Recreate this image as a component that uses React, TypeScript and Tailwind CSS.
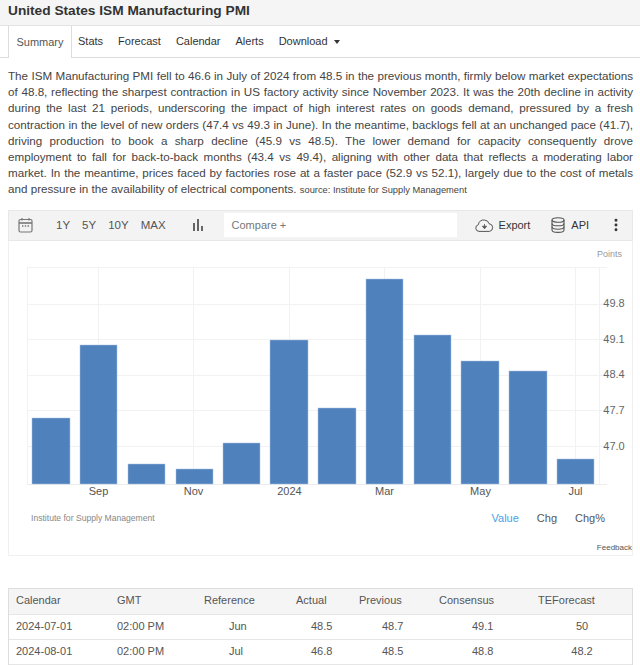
import React from 'react';
import { EllipsisVertical } from 'lucide-react';

const tabs = ['Stats', 'Forecast', 'Calendar', 'Alerts'];

// Summary paragraph, set line by line so every line is justified to the column
const summaryLines = [
  'The ISM Manufacturing PMI fell to 46.6 in July of 2024 from 48.5 in the previous month, firmly below market expectations',
  'of 48.8, reflecting the sharpest contraction in US factory activity since November 2023. It was the 20th decline in activity',
  'during the last 21 periods, underscoring the impact of high interest rates on goods demand, pressured by a fresh',
  'contraction in the level of new orders (47.4 vs 49.3 in June). In the meantime, backlogs fell at an unchanged pace (41.7),',
  'driving production to book a sharp decline (45.9 vs 48.5). The lower demand for capacity consequently drove',
  'employment to fall for back-to-back months (43.4 vs 49.4), aligning with other data that reflects a moderating labor',
  'market. In the meantime, prices faced by factories rose at a faster pace (52.9 vs 52.1), largely due to the cost of metals',
];

// Monthly readings drawn as bars: [left, right, top]
const bars: [number, number, number][] = [
  [24, 62, 418], [72, 109, 345], [120, 157, 464], [168, 205, 469],
  [215, 252, 443], [262, 300, 340], [310, 348, 408], [358, 395, 279],
  [406, 443, 335], [453, 491, 361], [501, 539, 371], [549, 586, 459],
];
const gridX = [90.5, 185.5, 281.5, 376.5, 472.5, 567.5];
const xLabels = [
  { x: 90.5, t: 'Sep' }, { x: 185.5, t: 'Nov' }, { x: 281.5, t: '2024' },
  { x: 376.5, t: 'Mar' }, { x: 472.5, t: 'May' }, { x: 567.5, t: 'Jul' },
];
const yLabels = [
  { y: 303, t: '49.8' }, { y: 339, t: '49.1' }, { y: 374, t: '48.4' },
  { y: 410, t: '47.7' }, { y: 446, t: '47.0' },
];

const rows = [
  { date: '2024-07-01', time: '02:00 PM', ref: 'Jun', actual: '48.5', prev: '48.7', cons: '49.1', te: '50' },
  { date: '2024-08-01', time: '02:00 PM', ref: 'Jul', actual: '46.8', prev: '48.5', cons: '48.8', te: '48.2' },
];

const rowGrid = 'grid grid-cols-[108px_87px_92px_63px_80px_99px_1fr] items-center';

const CalendarIcon = () => (
  <svg width="15" height="16" viewBox="0 0 15 16" fill="none" stroke="#777" strokeWidth="1.2">
    <rect x="1" y="2.5" width="13" height="12.5" rx="1.5" />
    <path d="M1 6h13" strokeWidth="1.6" />
    <path d="M4 1v2.5M11 1v2.5" />
    <path d="M4 9h1.4M6.8 9h1.4M9.6 9H11" strokeWidth="1.3" />
  </svg>
);

const BarsIcon = () => (
  <svg width="12" height="12" viewBox="0 0 12 12" fill="#666">
    <rect x="1" y="4" width="2" height="8" />
    <rect x="5" y="0" width="2" height="12" />
    <rect x="9" y="7" width="2" height="5" />
  </svg>
);

const CloudIcon = () => (
  <svg width="19" height="13" viewBox="0 0 19 13" fill="none" stroke="#555" strokeWidth="1">
    <path d="M5 12.4H4a3.4 3.4 0 0 1-.6-6.7A5 5 0 0 1 9.6 1.1a4.6 4.6 0 0 1 4.4 3.6 3.9 3.9 0 0 1 .6 7.7H5z" />
    <path d="M9.5 5v3.6M7.4 7.2h4.2L9.5 9.8z" fill="#555" strokeWidth="0.8" />
  </svg>
);

const DatabaseIcon = () => (
  <svg width="14" height="16" viewBox="0 0 14 16" fill="none" stroke="#555" strokeWidth="1.1">
    <ellipse cx="7" cy="3" rx="6" ry="2.3" />
    <path d="M1 3v10c0 1.3 2.7 2.4 6 2.4s6-1.1 6-2.4V3" />
    <path d="M1 6.4c0 1.3 2.7 2.4 6 2.4s6-1.1 6-2.4" />
    <path d="M1 9.8c0 1.3 2.7 2.4 6 2.4s6-1.1 6-2.4" />
  </svg>
);

export default function App() {
  return (
    <div className="w-[640px] h-[665px] overflow-hidden bg-white text-[#444] font-['Liberation_Sans',Arial,sans-serif]">
      {/* Page title */}
      <div className="h-[26px] bg-[#f5f5f5] border-b border-[#e3e3e3] pl-2 text-[13.7px] font-bold leading-[21px] text-[#333]">
        United States ISM Manufacturing PMI
      </div>

      {/* Tabs */}
      <div className="h-[32px] flex items-stretch border-b border-[#ddd] pl-2 text-[11px]">
        <div className="w-[64px] -mb-px bg-white border-x border-[#ddd] flex items-center justify-center text-[#555]">
          Summary
        </div>
        <div className="flex items-center gap-[15px] pl-[6px] text-[#333]">
          {tabs.map((t) => (
            <span key={t}>{t}</span>
          ))}
          <span className="flex items-center gap-[6px]">
            Download
            <span className="w-0 h-0 border-x-[3px] border-x-transparent border-t-[4px] border-t-[#333]" />
          </span>
        </div>
      </div>

      {/* Summary text */}
      <div className="mx-2 mt-[10px] w-[625px] text-[11.65px] leading-[16.2px] text-[#444]">
        {summaryLines.map((line) => (
          <p key={line} className="text-justify [text-align-last:justify] whitespace-nowrap">
            {line}
          </p>
        ))}
        <p>
          and pressure in the availability of electrical components.{' '}
          <span className="text-[9.3px]">source: Institute for Supply Management</span>
        </p>
      </div>

      {/* Chart panel */}
      <div className="mx-2 mt-[11px] w-[625px] h-[346px] border border-[#f0f0f0]">
        <div className="h-[31px] -mx-px -mt-px bg-[#f3f3f3] border border-[#e8e8e8] flex items-center text-[11px]">
          <span className="ml-[9px] w-[15px] flex">
            <CalendarIcon />
          </span>
          <div className="ml-[23px] flex gap-[12px] text-[11.5px] text-[#555]">
            <span>1Y</span>
            <span>5Y</span>
            <span>10Y</span>
            <span>MAX</span>
          </div>
          <span className="ml-[26px] flex">
            <BarsIcon />
          </span>
          <div className="ml-[20px] w-[233px] h-[24px] bg-white flex items-center pl-2 text-[#777]">Compare +</div>
          <span className="ml-[18px] flex">
            <CloudIcon />
          </span>
          <span className="ml-[5px] text-[#333]">Export</span>
          <span className="ml-[21px] flex">
            <DatabaseIcon />
          </span>
          <span className="ml-[6px] text-[#333]">API</span>
          <EllipsisVertical className="ml-[19px] text-[#333]" size={16} strokeWidth={2.4} />
        </div>

        <svg width="623" height="262" viewBox="1 241 623 262" className="block font-['Liberation_Sans',Arial,sans-serif]">
          <text x="614" y="257" textAnchor="end" fontSize="9" fill="#999">Points</text>
          {[267.5, 304.5, 339.5, 375.5, 410.5, 446.5].map((y) => (
            <line key={y} x1="19" x2="599" y1={y} y2={y} stroke="#f2f2f2" />
          ))}
          {gridX.concat([19.5, 591.5]).map((x) => (
            <line key={x} x1={x} x2={x} y1="267" y2="484" stroke="#f2f2f2" />
          ))}
          <line x1="19" x2="599" y1="484.5" y2="484.5" stroke="#ececec" />
          {bars.map(([l, r, top]) => (
            <rect key={l} x={l} y={top} width={r - l} height={484 - top} fill="#4f81bd" stroke="#a9c4e4" strokeWidth="0.5" />
          ))}
          {yLabels.map((l) => (
            <text key={l.t} x="606" y={l.y + 4} textAnchor="middle" fontSize="11" fill="#666">{l.t}</text>
          ))}
          {xLabels.map((l) => (
            <text key={l.t} x={l.x} y="495" textAnchor="middle" fontSize="11" fill="#555">{l.t}</text>
          ))}
        </svg>

        <div className="flex items-center h-[16px] mt-[8px] text-[11px]">
          <span className="ml-[22px] text-[8.6px] text-[#888]">Institute for Supply Management</span>
          <span className="ml-auto text-[#4a9fe8]">Value</span>
          <span className="ml-[18px] text-[#555]">Chg</span>
          <span className="ml-[18px] mr-[27px] text-[#555]">Chg%</span>
        </div>
        <div className="mt-[16px] text-right text-[8px] leading-[10px] text-[#555]">Feedback</div>
      </div>

      {/* Calendar table */}
      <div className="mx-2 mt-[32px] w-[625px] border-t border-x border-[#ddd] text-[11px]">
        <div className={`${rowGrid} h-[26px] pb-[2px] bg-[#f5f5f5] border-b border-[#e6e6e6] text-[#555]`}>
          <span className="pl-[7px]">Calendar</span>
          <span>GMT</span>
          <span>Reference</span>
          <span>Actual</span>
          <span>Previous</span>
          <span>Consensus</span>
          <span>TEForecast</span>
        </div>
        {rows.map((r) => (
          <div key={r.date} className={`${rowGrid} h-[25px] border-b border-[#e6e6e6] text-[#555]`}>
            <span className="pl-[7px]">{r.date}</span>
            <span>{r.time}</span>
            <span className="pl-[25px]">{r.ref}</span>
            <span className="pl-[15px]">{r.actual}</span>
            <span className="pl-[23px]">{r.prev}</span>
            <span className="pl-[33px]">{r.cons}</span>
            <span className="w-[88px] text-center">{r.te}</span>
          </div>
        ))}
      </div>
    </div>
  );
}
